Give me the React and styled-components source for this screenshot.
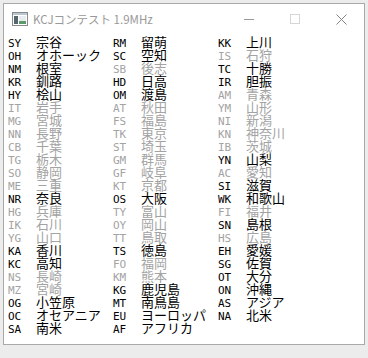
import React from "react";
import styled, { createGlobalStyle } from "styled-components";

const GlobalStyle = createGlobalStyle`
  html, body {
    margin: 0;
    padding: 0;
    background: #ececec;
  }
  body {
    width: 368px;
    height: 358px;
    overflow: hidden;
  }
`;

const Window = styled.div`
  box-sizing: border-box;
  margin: 3px 0 0 3px;
  width: 362px;
  height: 342px;
  background: #ffffff;
  border: 1px solid #a9a9a9;
  display: flex;
  flex-direction: column;
`;

const TitleBar = styled.div`
  height: 30px;
  display: flex;
  align-items: center;
  flex-shrink: 0;
`;

const AppIcon = styled.svg`
  margin-left: 8px;
  margin-right: 5px;
  flex-shrink: 0;
`;

const Title = styled.div`
  flex: 1;
  font-family: "Noto Sans CJK JP", "Noto Sans", sans-serif;
  font-size: 11.5px;
  color: #999999;
  white-space: nowrap;
  padding-bottom: 1px;
`;

const CaptionButton = styled.div`
  width: 46px;
  height: 30px;
  display: flex;
  align-items: center;
  justify-content: center;
`;

const MinGlyph = styled.div`
  width: 10px;
  height: 1px;
  background: #9a9a9a;
`;

const MaxGlyph = styled.div`
  box-sizing: border-box;
  width: 10px;
  height: 10px;
  border: 1px solid #d6d6d6;
`;

const List = styled.div`
  display: grid;
  grid-template-columns: repeat(3, 105px);
  grid-template-rows: repeat(23, 13px);
  grid-auto-flow: column;
  padding: 1px 0 0 4px;
`;

const Entry = styled.div`
  display: flex;
  align-items: baseline;
  height: 13px;
  line-height: 13px;
  white-space: nowrap;
  color: ${(p) => (p.$dim ? "#a3a3a3" : "#000000")};
`;

const Code = styled.span`
  width: 28px;
  flex-shrink: 0;
  font-family: "DejaVu Sans Mono", "Liberation Mono", monospace;
  font-size: 11px;
`;

const Name = styled.span`
  font-family: "Noto Sans CJK JP", sans-serif;
  font-size: 13px;
`;

// [code, name, active]
const areas = [
  ["SY", "宗谷", 1], ["OH", "オホーック", 1], ["NM", "根室", 1], ["KR", "釧路", 1],
  ["HY", "桧山", 1], ["IT", "岩手", 0], ["MG", "宮城", 0], ["NN", "長野", 0],
  ["CB", "千葉", 0], ["TG", "栃木", 0], ["SO", "静岡", 0], ["ME", "三重", 0],
  ["NR", "奈良", 1], ["HG", "兵庫", 0], ["IK", "石川", 0], ["YG", "山口", 0],
  ["KA", "香川", 1], ["KC", "高知", 1], ["NS", "長崎", 0], ["MZ", "宮崎", 0],
  ["OG", "小笠原", 1], ["OC", "オセアニア", 1], ["SA", "南米", 1],

  ["RM", "留萌", 1], ["SC", "空知", 1], ["SB", "後志", 0], ["HD", "日高", 1],
  ["OM", "渡島", 1], ["AT", "秋田", 0], ["FS", "福島", 0], ["TK", "東京", 0],
  ["ST", "埼玉", 0], ["GM", "群馬", 0], ["GF", "岐阜", 0], ["KT", "京都", 0],
  ["OS", "大阪", 1], ["TY", "富山", 0], ["OY", "岡山", 0], ["TT", "鳥取", 0],
  ["TS", "徳島", 1], ["FO", "福岡", 0], ["KM", "熊本", 0], ["KG", "鹿児島", 1],
  ["MT", "南鳥島", 1], ["EU", "ヨーロッパ", 1], ["AF", "アフリカ", 1],

  ["KK", "上川", 1], ["IS", "石狩", 0], ["TC", "十勝", 1], ["IR", "胆振", 1],
  ["AM", "青森", 0], ["YM", "山形", 0], ["NI", "新潟", 0], ["KN", "神奈川", 0],
  ["IB", "茨城", 0], ["YN", "山梨", 1], ["AC", "愛知", 0], ["SI", "滋賀", 1],
  ["WK", "和歌山", 1], ["FI", "福井", 0], ["SN", "島根", 1], ["HS", "広島", 0],
  ["EH", "愛媛", 1], ["SG", "佐賀", 1], ["OT", "大分", 1], ["ON", "沖縄", 1],
  ["AS", "アジア", 1], ["NA", "北米", 1],
];

export default function App() {
  return (
    <>
      <GlobalStyle />
      <Window>
        <TitleBar>
          <AppIcon width="16" height="14" viewBox="0 0 16 14">
            <rect x="0.5" y="0.5" width="15" height="13" fill="#ffffff" stroke="#8a8a8a" />
            <rect x="1" y="1" width="14" height="2" fill="#b9c6d3" />
            <rect x="2" y="4" width="4" height="8" fill="#55666f" />
            <rect x="7" y="4" width="7" height="8" fill="#e8ecee" />
            <rect x="7" y="9" width="7" height="3" fill="#5c9a6c" />
          </AppIcon>
          <Title>KCJコンテスト 1.9MHz</Title>
          <CaptionButton>
            <MinGlyph />
          </CaptionButton>
          <CaptionButton>
            <MaxGlyph />
          </CaptionButton>
          <CaptionButton>
            <svg width="11" height="11" viewBox="0 0 11 11">
              <path d="M0.5 0.5 L10.5 10.5 M10.5 0.5 L0.5 10.5" stroke="#858585" strokeWidth="1" />
            </svg>
          </CaptionButton>
        </TitleBar>
        <List>
          {areas.map(([code, name, on]) => (
            <Entry key={code} $dim={!on}>
              <Code>{code}</Code>
              <Name>{name}</Name>
            </Entry>
          ))}
        </List>
      </Window>
    </>
  );
}
